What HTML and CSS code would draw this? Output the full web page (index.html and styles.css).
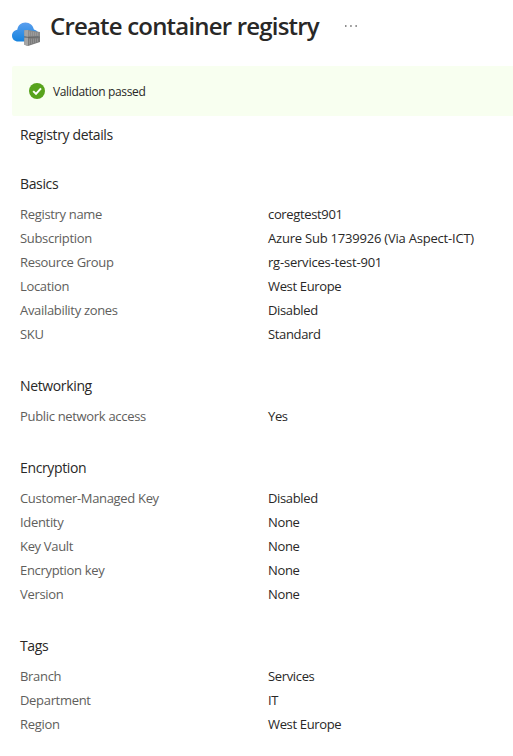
FILE: index.html
```html
<!DOCTYPE html>
<html lang="en">
<head>
<meta charset="utf-8">
<title>Create container registry</title>
<link rel="stylesheet" href="styles.css">
</head>
<body>
<header class="header">
  <svg class="logo" viewBox="0 0 28 24" aria-hidden="true">
    <defs>
      <linearGradient id="sky" x1="0" y1="0" x2="0" y2="1"><stop offset="0" stop-color="#5c9fee"/><stop offset="1" stop-color="#1583df"/></linearGradient>
    </defs>
    <path fill="url(#sky)" d="M6.200 19.500C2.700 19.500 0 17 0 13.700C0 10.500 2.300 8.200 5.300 7.800C5.900 3.300 9 .4 13.400.4C17.800.4 21.200 3.300 21.900 7.600C24.600 8.100 26.700 10.100 26.700 13C26.700 16.800 24.200 19.500 20.500 19.500Z"/>
    <path fill="#8b8b8b" d="M12.300 8.300 16 8l12 2v4.700l-12 .5-3.700-.9Z"/>
    <path fill="#7b7b7b" d="M12.300 15.500 16 15l12 .1v5L16 24l-3.700-1.300Z"/>
    <path fill="#a5a5a5" d="M12.300 8.300 16 8v7.200l-3.700-.9ZM12.300 15.500 16 15v9l-3.700-1.300Z"/>
    <path fill="none" stroke="#aaa" stroke-width=".5" d="M17.500 9.400v4.500M19.500 9.700v4.200M21.500 10v3.900M23.500 10.300v3.500M25.500 10.700v3M17.500 16.700v5.700M19.500 16.700v5.100M21.500 16.600v4.600M23.500 16.500v4M25.500 16.500v3.400"/>
    <path fill="none" stroke="#5c5c5c" stroke-width=".8" d="M12.300 14.900 16 15.300l12-.5"/>
  </svg>
  <h1 class="title">Create container registry</h1>
  <svg class="more" viewBox="0 0 12 2" aria-hidden="true"><path fill="#666" d="M0 .3h1.500v1.500H0zM5.200.3h1.500v1.500H5.200zM10.400.3h1.500v1.500h-1.500z"/></svg>
</header>
<div class="banner">
  <svg class="check" viewBox="0 0 16 16" aria-hidden="true"><circle cx="8" cy="8" r="8" fill="#57a31c"/><path d="m4.200 8.100 2.800 2.800 5-5.600" fill="none" stroke="#fff" stroke-width="2"/></svg>
  <span class="status">Validation passed</span>
</div>
<main class="details">
  <h2 class="heading">Registry details</h2>
  <section class="section first">
    <h3 class="heading">Basics</h3>
    <dl class="rows">
      <dt>Registry name</dt><dd>coregtest901</dd>
      <dt>Subscription</dt><dd class="wide">Azure Sub 1739926 (Via Aspect-ICT)</dd>
      <dt>Resource Group</dt><dd class="wide">rg-services-test-901</dd>
      <dt>Location</dt><dd>West Europe</dd>
      <dt>Availability zones</dt><dd>Disabled</dd>
      <dt>SKU</dt><dd>Standard</dd>
    </dl>
  </section>
  <section class="section">
    <h3 class="heading">Networking</h3>
    <dl class="rows">
      <dt>Public network access</dt><dd>Yes</dd>
    </dl>
  </section>
  <section class="section">
    <h3 class="heading">Encryption</h3>
    <dl class="rows">
      <dt>Customer-Managed Key</dt><dd>Disabled</dd>
      <dt>Identity</dt><dd>None</dd>
      <dt>Key Vault</dt><dd>None</dd>
      <dt>Encryption key</dt><dd>None</dd>
      <dt>Version</dt><dd>None</dd>
    </dl>
  </section>
  <section class="section">
    <h3 class="heading">Tags</h3>
    <dl class="rows">
      <dt>Branch</dt><dd>Services</dd>
      <dt>Department</dt><dd>IT</dd>
      <dt>Region</dt><dd>West Europe</dd>
    </dl>
  </section>
</main>
</body>
</html>
```
FILE: styles.css
```css
* { box-sizing: border-box; margin: 0; padding: 0; }
body {
  background: #fff;
  color: #292827;
  font: 13px/24px "Segoe UI", "Open Sans", "Noto Sans", sans-serif;
}
.header { display: flex; align-items: flex-start; height: 66px; padding: 10px 0 0 12px; }
.logo { width: 28px; height: 24px; margin-top: 12px; }
.title { margin-left: 10px; width: 270px; white-space: nowrap; font-size: 24px; line-height: 32px; font-weight: 550; letter-spacing: -0.81px; }
.more { width: 12px; height: 2px; margin: 15px 0 0 25px; }
.banner { display: flex; align-items: center; height: 50px; margin-left: 12px; padding-left: 17px; background: #f8fff0; border-radius: 2px 0 0 2px; }
.check { width: 16px; height: 16px; }
.status { margin: 2px 0 0 8px; font-size: 12px; letter-spacing: -0.35px; }
.details { padding: 7px 0 0 20px; }
.heading { height: 24px; line-height: 24px; font-size: 14px; font-weight: 400; letter-spacing: -0.36px; }
.section { margin-top: 28px; }
.section.first { margin-top: 25px; }
.rows { display: grid; grid-template-columns: 248px 1fr; grid-auto-rows: 24px; margin-top: 6px; letter-spacing: -0.35px; white-space: nowrap; }
.rows dt { color: #605e5c; letter-spacing: -0.32px; }
.rows .wide { letter-spacing: -0.21px; }
```
